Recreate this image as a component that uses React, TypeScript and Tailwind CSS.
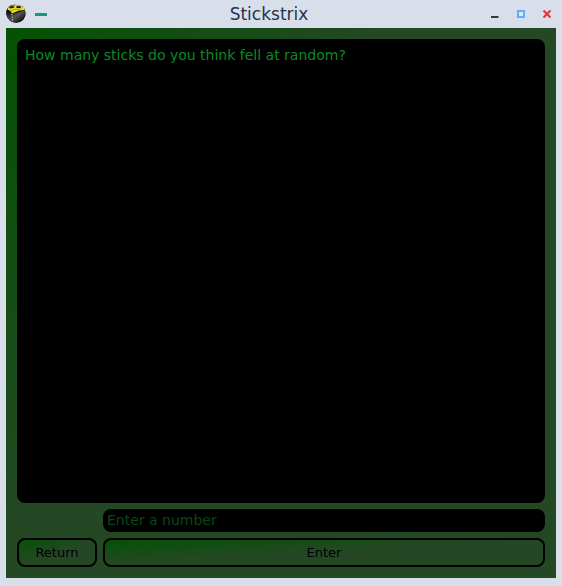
import { useState } from "react";

function DiceIcon() {
  return (
    <svg className="h-5 w-5 shrink-0" viewBox="0 0 20 20" aria-hidden="true">
      <defs>
        <linearGradient id="front" x1="0" y1="0" x2="0.8" y2="1">
          <stop offset="0" stopColor="#1a1a1a" />
          <stop offset="0.45" stopColor="#555555" />
          <stop offset="1" stopColor="#000000" />
        </linearGradient>
        <linearGradient id="side" x1="0" y1="0" x2="0" y2="1">
          <stop offset="0" stopColor="#050505" />
          <stop offset="1" stopColor="#666666" />
        </linearGradient>
      </defs>
      <path d="M.5 7Q1 2.500 6 1Q12 .2 17 2.500Q20 6 19.500 11Q18.500 16 14 18Q9 19.500 5 17.500Q1 15 .3 10Z" fill="#0b0b0b" />
      <path d="M.5 6.500L5.500 9.500L6.500 18Q1.500 15.500.4 10Z" fill="url(#side)" />
      <path d="M5.500 10L19 6.500Q20 13 14.500 17.500Q10 19.200 6.500 18Z" fill="url(#front)" />
      <path d="M2.500 3Q6 1 11 1Q15.500 1.200 18 3.200L19 6L12.500 6.800L6 9.500L4.500 7L1.500 5.500Z" fill="#eadc2e" />
      <path d="M3 2.800L7.500 2L8.500 3.600L4 4.400ZM10.500 2L14.500 2.200L15 3.900L10.500 3.900Z" fill="#1b1a05" />
      <path d="M5 6.500Q9 4.500 15 5.300" stroke="#8d8417" strokeWidth=".7" fill="none" />
      <path d="M5.700 10L6.700 17" stroke="#c5c5c5" strokeWidth="1" strokeDasharray="1.500 1" />
    </svg>
  );
}

function TitleBar() {
  return (
    <header className="flex h-7 items-center pr-[5px]">
      <DiceIcon />
      <button type="button" aria-label="Window menu" className="ml-[9px] flex h-5 w-3 items-center">
        <span className="h-[3px] w-3 bg-[#109a7c]" />
      </button>
      <h1 className="flex-1 text-center text-[17px] leading-7 text-[#24344d]">Stickstrix</h1>
      <div className="flex items-center gap-[18px]">
        <button type="button" aria-label="Minimize" className="h-2 w-2">
          <svg viewBox="0 0 8 8" className="h-2 w-2">
            <path d="M0 7H7.500" stroke="#2b3a4e" strokeWidth="2" />
          </svg>
        </button>
        <button type="button" aria-label="Maximize" className="h-2 w-2">
          <svg viewBox="0 0 8 8" className="h-2 w-2">
            <rect x="1" y="1" width="6" height="6" fill="#d6ecff" stroke="#62aef0" strokeWidth="2" />
          </svg>
        </button>
        <button type="button" aria-label="Close" className="h-2 w-2">
          <svg viewBox="0 0 8 8" className="h-2 w-2">
            <path d="M.5 .5L7.500 7.500M7.500 .5L.5 7.500" stroke="#ee3340" strokeWidth="2.200" />
          </svg>
        </button>
      </div>
    </header>
  );
}

const buttonStyle =
  "h-[29px] rounded-lg border-2 border-black bg-linear-to-br/srgb from-[#045204] to-[#244824] to-48% text-[13px] text-black";

export default function App() {
  const [guess, setGuess] = useState("");

  return (
    <div className="flex min-h-screen flex-col bg-[#d8deea] px-1.5 pb-2 font-['DejaVu_Sans',sans-serif]">
      <TitleBar />
      <main className="flex flex-1 flex-col gap-1.5 bg-linear-126/srgb from-[#045204] to-[#244824] to-40% p-[11px]">
        <section className="flex-1 rounded-lg bg-black px-2 py-1.5">
          <p className="text-sm text-[#0a8a26]">How many sticks do you think fell at random?</p>
        </section>
        <form className="grid grid-cols-[80px_1fr] gap-1.5" onSubmit={(e) => e.preventDefault()}>
          <input
            type="text"
            inputMode="numeric"
            aria-label="Enter a number"
            placeholder="Enter a number"
            value={guess}
            onChange={(e) => setGuess(e.target.value)}
            className="col-start-2 h-[23px] min-w-0 rounded-lg bg-black px-1 pb-0.5 text-sm text-[#0a8a26] outline-none placeholder:text-[#054a16]"
          />
          <button type="button" className={buttonStyle}>
            Return
          </button>
          <button type="submit" className={buttonStyle}>
            Enter
          </button>
        </form>
      </main>
    </div>
  );
}
